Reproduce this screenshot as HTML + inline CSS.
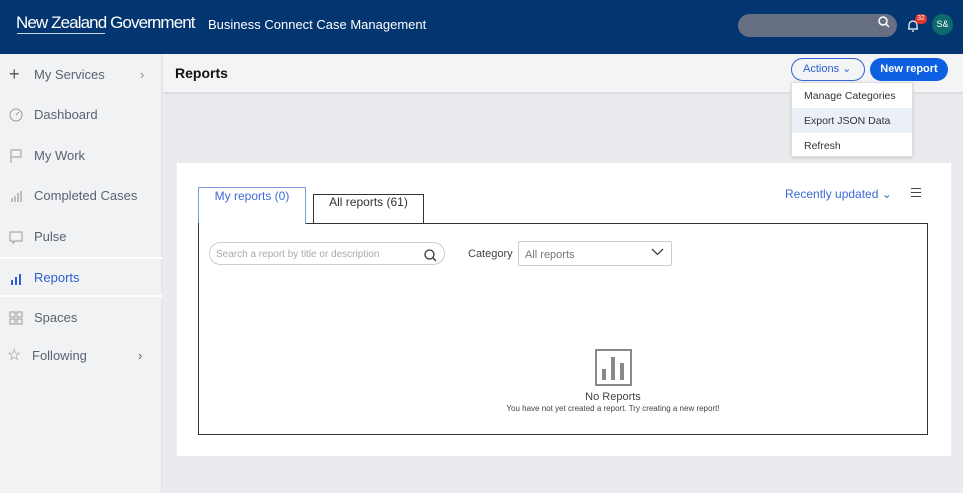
<!DOCTYPE html><html><head><style>
*{margin:0;padding:0;box-sizing:border-box}
body{width:963px;height:493px;overflow:hidden;font-family:"Liberation Sans",sans-serif;background:#e9ebee;position:relative}
.a{position:absolute}
.hdr{left:0;top:0;width:963px;height:54px;background:#033570}
.side{left:0;top:54px;width:162px;height:439px;background:#f1f2f4;border-right:1px solid #e2e4e8}
.it{position:absolute;left:0;width:162px;height:38px;font-size:13px;color:#5a6270;line-height:40px;padding-left:34px}
.ic{position:absolute;left:9px;top:13px;width:14px;height:14px}
.bar{left:163px;top:54px;width:800px;height:38px;background:#f3f4f6;box-shadow:0 2px 2px #d8dadd}
.card{left:177px;top:163px;width:774px;height:293px;background:#fff}
</style></head><body>
<div class="a hdr"></div>
<div class="a" style="left:16px;top:13px;color:#fff;font-size:17px;letter-spacing:-0.9px;white-space:nowrap">New Zealand Government</div>
<div class="a" style="left:17px;top:33px;width:88px;height:1px;background:#cfd8e6"></div>
<div class="a" style="left:208px;top:17px;color:#fff;font-size:13px">Business Connect Case Management</div>
<div class="a" style="left:738px;top:14px;width:159px;height:23px;border-radius:12px;background:#666f84"></div>
<svg class="a" style="left:878px;top:16px" width="12" height="12"><circle cx="5" cy="5" r="4" fill="none" stroke="#fff" stroke-width="1.5"/><path d="M8 8l3 3" stroke="#fff" stroke-width="1.5"/></svg>
<svg class="a" style="left:906px;top:18px" width="14" height="15"><path d="M2 11h10M3 11V7a4 4 0 018 0v4M6 13h2" stroke="#fff" fill="none" stroke-width="1.2"/></svg>
<div class="a" style="left:915px;top:14px;width:12px;height:10px;border-radius:5px;background:#e0352b;color:#fff;font-size:7px;text-align:center;line-height:10px">32</div>
<div class="a" style="left:932px;top:14px;width:21px;height:21px;border-radius:50%;background:#0d6a6c;color:#fff;font-size:9px;text-align:center;line-height:21px">S&amp;</div>
<div class="a side">
<div class="it" style="top:1px"><span class="ic" style="font-size:18px;top:0;line-height:38px;color:#555">+</span>My Services<span style="position:absolute;left:140px;color:#888">›</span></div>
<div class="it" style="top:41px"><svg class="ic" viewBox="0 0 14 14"><circle cx="7" cy="7" r="6" fill="none" stroke="#999"/><path d="M7 7l3-3" stroke="#999"/></svg>Dashboard</div>
<div class="it" style="top:82px"><svg class="ic" viewBox="0 0 14 14"><path d="M2 14V1h10v7H2" fill="none" stroke="#999"/></svg>My Work</div>
<div class="it" style="top:122px"><svg class="ic" viewBox="0 0 14 14"><path d="M3 13V9M6 13V7M9 13V4M12 13V2" stroke="#aaa" stroke-width="1.5"/></svg>Completed Cases</div>
<div class="it" style="top:163px"><svg class="ic" viewBox="0 0 14 14"><path d="M1 2h12v9H6l-2 2v-2H1z" fill="none" stroke="#999"/></svg>Pulse</div>
<div class="it" style="top:203px;border-top:2px solid #fff;border-bottom:2px solid #fff;color:#2f5fd0;height:40px;line-height:38px"><svg class="ic" viewBox="0 0 14 14"><path d="M3 13V8M7 13V5M11 13V2" stroke="#2f5fd0" stroke-width="2"/></svg>Reports</div>
<div class="it" style="top:244px"><svg class="ic" viewBox="0 0 14 14"><rect x="1" y="1" width="5" height="5" fill="none" stroke="#999"/><rect x="8" y="1" width="5" height="5" fill="none" stroke="#999"/><rect x="1" y="8" width="5" height="5" fill="none" stroke="#999"/><rect x="8" y="8" width="5" height="5" fill="none" stroke="#999"/></svg>Spaces</div>
<div class="it" style="top:282px;padding-left:32px"><span class="ic" style="top:0;font-size:16px;color:#888;line-height:40px;left:7px">☆</span>Following<span style="position:absolute;left:138px;color:#666">›</span></div>
</div>
<div class="a bar"></div>
<div class="a" style="left:175px;top:65px;font-size:14px;font-weight:bold;color:#111">Reports</div>
<div class="a" style="left:791px;top:58px;width:74px;height:23px;border:1px solid #2f5fd0;border-radius:12px;color:#2f5fd0;font-size:11px;line-height:21px;padding-left:11px">Actions ⌄</div>
<div class="a" style="left:870px;top:58px;width:78px;height:23px;background:#0b5fe0;border-radius:12px;color:#fff;font-size:11px;font-weight:bold;line-height:23px;text-align:center">New report</div>
<div class="a" style="left:791px;top:82px;width:122px;height:75px;background:#fff;border:1px solid #ddd;box-shadow:0 1px 3px #ccc;font-size:10.5px;color:#333">
<div style="height:25px;line-height:27px;padding-left:12px">Manage Categories</div>
<div style="height:25px;line-height:27px;padding-left:12px;background:#ebeff8">Export JSON Data</div>
<div style="height:25px;line-height:27px;padding-left:12px">Refresh</div></div>
<div class="a card"></div>
<div class="a" style="left:198px;top:187px;width:108px;height:37px;border:1px solid #7a9ae0;border-bottom:none;background:#fff;color:#3d6ad6;font-size:12px;text-align:center;padding-top:1px">My reports (0)</div>
<div class="a" style="left:313px;top:194px;width:111px;height:30px;border:1px solid #333;border-bottom:none;font-size:12px;text-align:center;padding-top:0;color:#333">All reports (61)</div>
<div class="a" style="left:198px;top:223px;width:730px;height:212px;border:1px solid #333;border-top:none"></div>
<div class="a" style="left:306px;top:223px;width:622px;height:1px;background:#333"></div>
<div class="a" style="left:785px;top:187px;font-size:12px;color:#3d6ad6">Recently updated ⌄</div>
<div class="a" style="left:911px;top:188px;width:10px;height:9px;border-top:1px solid #444;border-bottom:1px solid #444"><div style="margin-top:3px;height:1px;background:#444"></div></div>
<div class="a" style="left:209px;top:242px;width:236px;height:23px;border:1px solid #ccc;border-radius:12px;font-size:10px;color:#aaa;line-height:23px;padding-left:6px">Search a report by title or description</div>
<svg class="a" style="left:424px;top:249px" width="13" height="13"><circle cx="5.5" cy="5.5" r="4.5" fill="none" stroke="#333" stroke-width="1.3"/><path d="M9 9l3 3" stroke="#333" stroke-width="1.3"/></svg>
<div class="a" style="left:468px;top:248px;font-size:11px;color:#444">Category</div>
<div class="a" style="left:518px;top:241px;width:154px;height:25px;border:1px solid #ccc;border-radius:2px;font-size:11px;color:#777;line-height:26px;padding-left:6px">All reports</div>
<svg class="a" style="left:651px;top:248px" width="13" height="8"><path d="M1 1l5.5 5.5L12 1" fill="none" stroke="#444" stroke-width="1.3"/></svg>
<svg class="a" style="left:595px;top:349px" width="37" height="37"><rect x="1" y="1" width="35" height="35" fill="none" stroke="#888" stroke-width="2"/><path d="M9 31V20M18 31V8M27 31V14" stroke="#888" stroke-width="4"/></svg>
<div class="a" style="left:480px;top:391px;width:266px;text-align:center;font-size:11px;color:#444">No Reports</div>
<div class="a" style="left:470px;top:404px;width:286px;text-align:center;font-size:8px;color:#444">You have not yet created a report. Try creating a new report!</div>
</body></html>
